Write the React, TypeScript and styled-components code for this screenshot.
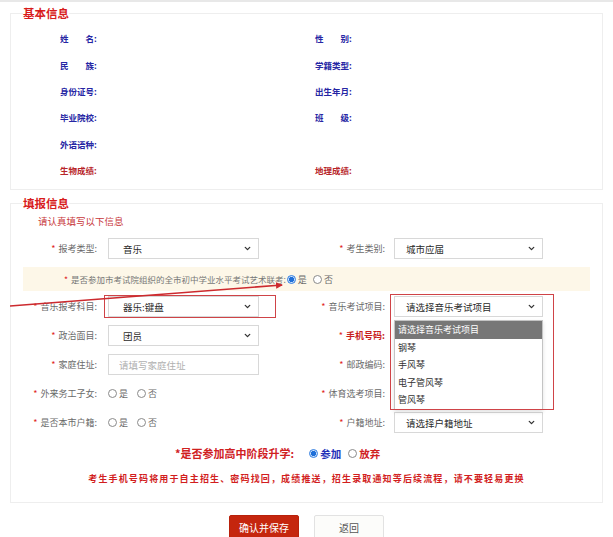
import React from 'react'
import styled, { createGlobalStyle } from 'styled-components'
import { ChevronDown } from 'lucide-react'

const GlobalStyle = createGlobalStyle`
  html, body {
    margin: 0;
    padding: 0;
    background: #fff;
  }
  body {
    font-family: "Noto Sans CJK SC", "Noto Sans", sans-serif;
    color: #333;
  }
  * {
    box-sizing: border-box;
  }
`

const Page = styled.div`
  position: relative;
  width: 613px;
  border-top: 2px solid #e8e8e8;
  padding-top: 3px;
`

const Panel = styled.fieldset<{ $bottom: number }>`
  margin: 0 10px;
  padding: 0 12px ${(p) => p.$bottom}px;
  border: 1px solid #eeeeee;
  min-width: 0;
  & + & {
    margin-top: 5px;
  }
`

const Legend = styled.legend`
  padding: 0;
  font-size: 11.5px;
  line-height: 16px;
  font-weight: bold;
  color: #d81c1c;
`

/* ---------- 基本信息 ---------- */

const InfoGrid = styled.div`
  display: grid;
  grid-template-columns: 255px 1fr;
  grid-auto-rows: 26.4px;
  padding: 4px 0 0 37px;
`

const InfoItem = styled.div<{ $red?: boolean }>`
  display: flex;
  align-items: center;
  font-size: 8.5px;
  font-weight: bold;
  color: ${(p) => (p.$red ? '#b8262a' : '#2626a4')};
`

const InfoName = styled.span`
  display: inline-block;
  width: 34px;
  text-align: justify;
  text-align-last: justify;
`

/* ---------- 填报信息 ---------- */

const Subtitle = styled.div`
  margin-top: 3px;
  padding-left: 15px;
  font-size: 9.5px;
  line-height: 14px;
  color: #c8373a;
`

const FormGrid = styled.div`
  display: grid;
  grid-template-columns: 85px 151px 135px 149px 1fr;
  grid-auto-rows: 21px;
  row-gap: 8px;
  margin-top: 10px;
`

const FieldLabel = styled.div<{ $pr: number; $strong?: boolean }>`
  display: flex;
  align-items: center;
  justify-content: flex-end;
  padding-right: ${(p) => p.$pr}px;
  font-size: 9px;
  white-space: nowrap;
  color: ${(p) => (p.$strong ? '#c81e1e' : '#6a6a6a')};
  font-weight: ${(p) => (p.$strong ? 'bold' : 'normal')};
`

const Star = styled.span`
  color: #e02424;
  margin-right: 3px;
  font-weight: normal;
`

const Control = styled.div`
  position: relative;
  display: flex;
  align-items: center;
`

const SelectBox = styled.div<{ $pad: number }>`
  display: flex;
  align-items: center;
  justify-content: space-between;
  width: 100%;
  height: 21px;
  padding: 0 6px 0 ${(p) => p.$pad}px;
  border: 1px solid #d8d8d8;
  background: #fff;
  font-size: 9.5px;
  color: #2a2a2a;
`

const TextInput = styled.input`
  width: 100%;
  height: 21px;
  padding: 0 0 0 10px;
  border: 1px solid #d8d8d8;
  background: #fff;
  font-family: inherit;
  font-size: 9.5px;
  color: #333;
  outline: none;
  &::placeholder {
    color: #b0b0b0;
  }
`

const Band = styled.div`
  grid-column: 1 / -1;
  display: flex;
  align-items: center;
  height: 24px;
  padding-left: 41px;
  background: #fdf7e8;
  font-size: 8.5px;
  color: #777;
`

const RadioGroup = styled.div<{ $gap: number; $offset?: number }>`
  display: flex;
  align-items: center;
  gap: ${(p) => p.$gap}px;
  margin-left: ${(p) => p.$offset ?? 0}px;
`

const RadioOption = styled.label<{ $tone?: string; $bold?: boolean; $size?: number }>`
  display: inline-flex;
  align-items: center;
  gap: 2px;
  font-size: ${(p) => p.$size ?? 9}px;
  font-weight: ${(p) => (p.$bold ? 'bold' : 'normal')};
  color: ${(p) => p.$tone ?? '#6a6a6a'};
`

const RadioDot = styled.span<{ $checked?: boolean }>`
  display: inline-block;
  width: 9px;
  height: 9px;
  border-radius: 50%;
  border: 1px solid ${(p) => (p.$checked ? '#2f7de1' : '#8a8a8a')};
  background: ${(p) =>
    p.$checked ? 'radial-gradient(circle, #1f6fd8 0 2.4px, #cfe2fa 2.9px)' : '#fff'};
`

const Callout = styled.div<{ $l: number; $t: number; $w: number; $h: number }>`
  position: absolute;
  left: ${(p) => p.$l}px;
  top: ${(p) => p.$t}px;
  width: ${(p) => p.$w}px;
  height: ${(p) => p.$h}px;
  border: 1.5px solid #cf4347;
  pointer-events: none;
  z-index: 3;
`

const Menu = styled.ul`
  position: absolute;
  top: 24px;
  left: 0;
  width: 149px;
  margin: 0;
  padding: 0;
  list-style: none;
  background: #fff;
  border: 1px solid #c4c4c4;
  box-shadow: 0 2px 4px rgba(0, 0, 0, 0.12);
  z-index: 2;
`

const MenuItem = styled.li<{ $active?: boolean }>`
  height: 17.5px;
  line-height: 17.5px;
  padding-left: 3px;
  font-size: 9px;
  background: ${(p) => (p.$active ? '#777' : 'transparent')};
  color: ${(p) => (p.$active ? '#fff' : '#333')};
`

const ChoiceRow = styled.div`
  display: flex;
  align-items: center;
  height: 16px;
  margin-top: 12px;
  padding-left: 152px;
`

const ChoiceLabel = styled.span`
  font-size: 11px;
  font-weight: bold;
  color: #d0201f;
  margin-right: 15px;
`

const Notice = styled.div`
  margin-top: 11px;
  text-align: center;
  font-size: 9px;
  line-height: 14px;
  font-weight: bold;
  letter-spacing: 1.15px;
  color: #d21e1e;
`

const Actions = styled.div`
  display: flex;
  justify-content: center;
  gap: 15px;
  margin-top: 12px;
`

const Button = styled.button<{ $primary?: boolean }>`
  width: 70px;
  height: 24px;
  border-radius: 2px;
  border: 1px solid ${(p) => (p.$primary ? '#b8210b' : '#e2e2e2')};
  background: ${(p) => (p.$primary ? '#c5260e' : '#fcfcfa')};
  color: ${(p) => (p.$primary ? '#fff' : '#555')};
  font-family: inherit;
  font-size: 10px;
  padding: 0;
`

const ArrowLayer = styled.svg`
  position: absolute;
  top: 0;
  left: 0;
  pointer-events: none;
  z-index: 4;
`

const basicInfo: Array<[string, boolean]> = [
  ['姓名', false],
  ['性别', false],
  ['民族', false],
  ['学籍类型', false],
  ['身份证号', false],
  ['出生年月', false],
  ['毕业院校', false],
  ['班级', false],
  ['外语语种', false],
  ['', false],
  ['生物成绩', true],
  ['地理成绩', true],
]

const musicItems = ['请选择音乐考试项目', '钢琴', '手风琴', '电子管风琴', '管风琴']

function Label({ text, pr, strong }: { text: string; pr: number; strong?: boolean }) {
  return (
    <FieldLabel $pr={pr} $strong={strong}>
      <Star>*</Star>
      {text}:
    </FieldLabel>
  )
}

function Select({ value, pad }: { value?: string; pad: number }) {
  return (
    <SelectBox $pad={pad}>
      <span>{value}</span>
      <ChevronDown size={9} strokeWidth={3.5} color="#333" />
    </SelectBox>
  )
}

function YesNo() {
  return (
    <RadioGroup $gap={9}>
      <RadioOption>
        <RadioDot />是
      </RadioOption>
      <RadioOption>
        <RadioDot />否
      </RadioOption>
    </RadioGroup>
  )
}

export default function App() {
  return (
    <Page>
      <GlobalStyle />
      <Panel $bottom={6}>
        <Legend>基本信息</Legend>
        <InfoGrid>
          {basicInfo.map(([name, red], i) => (
            <InfoItem key={i} $red={red}>
              {name && (
                <>
                  <InfoName>{name}</InfoName>:
                </>
              )}
            </InfoItem>
          ))}
        </InfoGrid>
      </Panel>

      <Panel $bottom={16}>
        <Legend>填报信息</Legend>
        <Subtitle>请认真填写以下信息</Subtitle>
        <FormGrid>
          <Label text="报考类型" pr={11} />
          <Control>
            <Select value="音乐" pad={14} />
          </Control>
          <Label text="考生类别" pr={9} />
          <Control>
            <Select value="城市应届" pad={11} />
          </Control>
          <div />

          <Band>
            <Star>*</Star>是否参加市考试院组织的全市初中学业水平考试艺术联考:
            <RadioGroup $gap={6} $offset={1}>
              <RadioOption>
                <RadioDot $checked />是
              </RadioOption>
              <RadioOption>
                <RadioDot />否
              </RadioOption>
            </RadioGroup>
          </Band>

          <Label text="音乐报考科目" pr={11} />
          <Control>
            <Select value="器乐:键盘" pad={14} />
            <Callout $l={-4} $t={-1} $w={172} $h={23} />
          </Control>
          <Label text="音乐考试项目" pr={9} />
          <Control>
            <Select value="请选择音乐考试项目" pad={11} />
            <Menu>
              {musicItems.map((item, i) => (
                <MenuItem key={item} $active={i === 0}>
                  {item}
                </MenuItem>
              ))}
            </Menu>
            <Callout $l={-4} $t={-2} $w={164} $h={116} />
          </Control>
          <div />

          <Label text="政治面目" pr={11} />
          <Control>
            <Select value="团员" pad={14} />
          </Control>
          <Label text="手机号码" pr={9} strong />
          <Control>
            <TextInput />
          </Control>
          <div />

          <Label text="家庭住址" pr={11} />
          <Control>
            <TextInput placeholder="请填写家庭住址" />
          </Control>
          <Label text="邮政编码" pr={9} />
          <Control>
            <TextInput />
          </Control>
          <div />

          <Label text="外来务工子女" pr={11} />
          <Control>
            <YesNo />
          </Control>
          <Label text="体育选考项目" pr={9} />
          <Control>
            <Select pad={11} />
          </Control>
          <div />

          <Label text="是否本市户籍" pr={11} />
          <Control>
            <YesNo />
          </Control>
          <Label text="户籍地址" pr={9} />
          <Control>
            <Select value="请选择户籍地址" pad={11} />
          </Control>
          <div />
        </FormGrid>

        <ChoiceRow>
          <ChoiceLabel>*是否参加高中阶段升学:</ChoiceLabel>
          <RadioGroup $gap={7}>
            <RadioOption $tone="#2330b8" $bold $size={10.5}>
              <RadioDot $checked />参加
            </RadioOption>
            <RadioOption $tone="#d0201f" $bold $size={10.5}>
              <RadioDot />放弃
            </RadioOption>
          </RadioGroup>
        </ChoiceRow>

        <Notice>
          考生手机号码将用于自主招生、密码找回，成绩推送，招生录取通知等后续流程，请不要轻易更换
        </Notice>
      </Panel>

      <Actions>
        <Button $primary>确认并保存</Button>
        <Button>返回</Button>
      </Actions>

      <ArrowLayer width="613" height="537" viewBox="0 0 613 537">
        <defs>
          <marker
            id="head"
            markerWidth="8"
            markerHeight="8"
            refX="6"
            refY="4"
            orient="auto"
            markerUnits="userSpaceOnUse"
          >
            <path d="M0,0.8 L7,4 L0,7.2 Z" fill="#cc2a2e" />
          </marker>
        </defs>
        <line
          x1="10"
          y1="304"
          x2="282"
          y2="283"
          stroke="#cc2a2e"
          strokeWidth="1.6"
          markerEnd="url(#head)"
        />
      </ArrowLayer>
    </Page>
  )
}
